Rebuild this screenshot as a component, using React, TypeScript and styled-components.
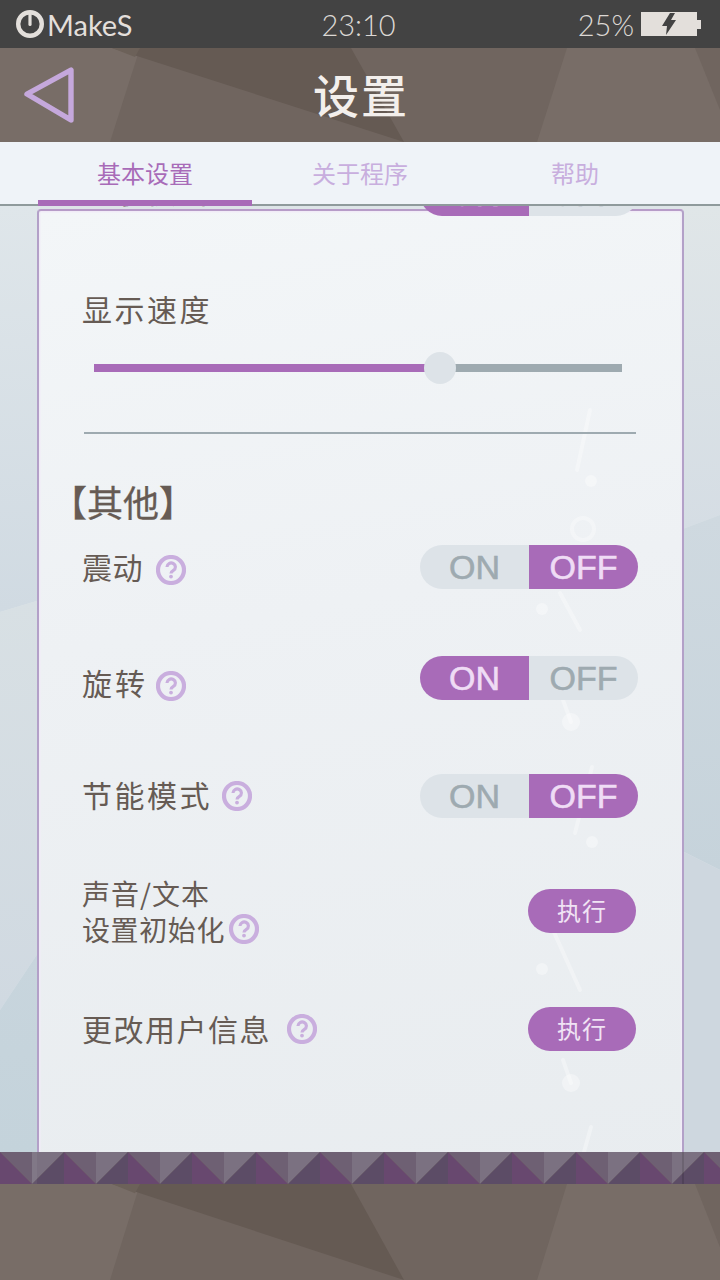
import React from "react";
import styled, { createGlobalStyle } from "styled-components";

const CJK = `"Noto Sans CJK SC", "Noto Sans", sans-serif`;
const PURPLE = "#a86bb8";
const INK = "#665b54";

const Global = createGlobalStyle`
  html, body { margin: 0; padding: 0; background: #736860; }
  * { box-sizing: border-box; }
`;

const Screen = styled.div`
  width: 720px; height: 1280px; overflow: hidden;
  display: flex; flex-direction: column;
  font-family: ${CJK};
`;

const StatusBar = styled.div`
  height: 48px; flex: none; background: #434343; color: #dcd8d4;
  display: grid; grid-template-columns: 1fr auto 1fr; align-items: center;
  padding: 0 19px 0 16px;
  font-family: "Lato", sans-serif; font-size: 29px; font-weight: 300;
`;
const Brand = styled.div`
  display: flex; align-items: center; gap: 3px; font-weight: 400; font-size: 29px; color: #e3dfdb;
`;
const BatteryGroup = styled.div`
  display: flex; align-items: center; justify-content: flex-end; gap: 7px;
`;

const TextureBar = styled.div<{ $h: number }>`
  position: relative; flex: none; height: ${p => p.$h}px; background: #786d67; overflow: hidden;
`;
const TextureSvg = styled.svg`
  position: absolute; inset: 0; width: 100%; height: 100%; display: block;
`;
const HeaderRow = styled.div`
  position: relative; height: 100%; display: flex; align-items: center; justify-content: center;
  padding: 0 0 4px 2px;
`;
const BackButton = styled.svg`
  position: absolute; left: 22px; top: 17px;
`;
const Title = styled.h1`
  margin: 0; font-size: 46px; font-weight: 500; line-height: 1; letter-spacing: 2px; color: #f3efec;
  font-family: ${CJK};
`;

const Tabs = styled.div`
  flex: none; height: 64px; background: #eff3f8; border-bottom: 2px solid #8f9a9c;
  display: grid; grid-template-columns: 214px 216px 214px; padding: 0 38px;
  position: relative; z-index: 2;
`;
const Tab = styled.div<{ $active?: boolean }>`
  height: 64px; padding-top: 14px; text-align: center; font-size: 24px; line-height: 34px;
  color: ${p => (p.$active ? PURPLE : "#c8aede")};
  border-bottom: 6px solid ${p => (p.$active ? PURPLE : "transparent")};
`;

const Main = styled.div`
  position: relative; flex: 1; min-height: 0; overflow: hidden; padding: 3px 36px 0 37px;
  background: #dde4e8;
`;
const MainDeco = styled.svg`
  position: absolute; left: 0; top: 0; display: block;
`;
const Card = styled.div`
  position: relative; height: 1000px; border: 2px solid #b3a0c8; border-top-color: #b79cc8; border-radius: 4px;
  background: linear-gradient(170deg, #f3f6f8 0%, #eef1f4 40%, #e8ecef 100%);
  box-shadow: inset 0 0 0 1.5px #f1ecf7;
`;
const CardDeco = styled.svg`
  position: absolute; left: 0; top: 0; display: block;
`;
const CardBody = styled.div`
  position: relative; display: flex; flex-direction: column; padding: 0 44px 0 43px;
`;

const Row = styled.div<{ $top: number }>`
  height: 44px; margin-top: ${p => p.$top}px; flex: none;
  display: flex; align-items: center; justify-content: space-between;
`;
const LabelGroup = styled.div<{ $gap?: number; $shift?: number }>`
  display: flex; align-items: center; gap: ${p => p.$gap ?? 10}px;
  padding-top: ${p => p.$shift ?? 0}px;
`;
const Label = styled.span<{ $ls?: number; $lift?: number }>`
  font-size: 30px; line-height: 40px; letter-spacing: ${p => p.$ls ?? 2}px; color: ${INK}; white-space: nowrap;
  padding-bottom: ${p => (p.$lift ?? 0) * 2}px;
`;
const SmallLabel = styled.div`
  font-size: 28px; line-height: 36px; letter-spacing: 1px; color: ${INK}; white-space: nowrap;
`;
const SmallLine = styled.div`
  display: flex; align-items: center; gap: 4px; letter-spacing: 0.6px;
`;
const SpeedLabel = styled(Label)`
  display: block; margin-top: 72px;
`;
const Slider = styled.div`
  position: relative; flex: none; height: 8px; width: 528px; margin: 36px 0 12px 12px; background: #9eaab0;
`;
const SliderFill = styled.div`
  height: 100%; background: ${PURPLE};
`;
const SliderThumb = styled.div`
  position: absolute; top: -12px; width: 32px; height: 32px; margin-left: -16px;
  border-radius: 50%; background: #dde3e8;
`;
const Divider = styled.div`
  flex: none; height: 2px; width: 552px; margin: 48px 0 0 2px; background: #9eaab0;
`;
const SectionTitle = styled.h2`
  margin: 45px 0 2px -31px; font-size: 36px; line-height: 44px; font-weight: 400; color: ${INK};
  font-family: ${CJK}; -webkit-text-stroke: 0.3px ${INK};
`;

const ToggleBox = styled.div`
  display: flex; width: 218px; height: 44px; border-radius: 22px; overflow: hidden; flex: none;
`;
const ToggleSeg = styled.div<{ $active: boolean }>`
  width: 109px; height: 100%; display: flex; align-items: center; justify-content: center;
  font-family: "Liberation Sans", Arial, sans-serif; font-size: 34px; line-height: 1;
  -webkit-text-stroke: 0.6px ${p => (p.$active ? "#efdcf5" : "#9eaab0")};
  background: ${p => (p.$active ? PURPLE : "#dde3e8")};
  color: ${p => (p.$active ? "#efdcf5" : "#9eaab0")};
`;
const ActionButton = styled.div`
  width: 108px; height: 44px; margin-right: 2px; padding-bottom: 4px; border-radius: 22px;
  background: ${PURPLE}; color: #f0e3f4;
  display: flex; align-items: center; justify-content: center; font-size: 24px; letter-spacing: 1px;
`;
const Spacer = styled.div`
  height: 60px; flex: none;
`;

const BandSvg = styled.svg`
  display: block; flex: none; position: relative; z-index: 2;
`;

const Toggle = ({ on }: { on: boolean }) => (
  <ToggleBox>
    <ToggleSeg $active={on}>ON</ToggleSeg>
    <ToggleSeg $active={!on}>OFF</ToggleSeg>
  </ToggleBox>
);

const Help = () => (
  <svg width="30" height="30" viewBox="0 0 30 30" fill="none" style={{ flex: "none" }}>
    <circle cx="15" cy="15" r="13" stroke="#c9aede" strokeWidth="4.2" />
    <path d="M11 12a4.2 4 0 1 1 6.4 3.4c-1.5.9-2.4 1.6-2.4 3" stroke="#c9aede" strokeWidth="3.2" />
    <circle cx="15" cy="21.6" r="1.9" fill="#c9aede" />
  </svg>
);

const Texture = () => (
  <TextureSvg viewBox="0 0 720 94" preserveAspectRatio="none">
    <polygon points="140,0 567,0 537,94 110,94" fill="#70655f" />
    <polygon points="112,0 351,0 404,94" fill="#655a53" />
    <polygon points="112,0 140,0 135,9" fill="#6c6159" />
    <polygon points="695,0 720,0 720,62" fill="#70655f" />
  </TextureSvg>
);

const Band = () => {
  const items = Array.from({ length: 13 }, (_, i) => i * 64);
  return (
    <BandSvg width="720" height="32" viewBox="0 0 720 32">
      {items.map(x => (
        <g key={x}>
          <polygon points={`${x},0 ${x + 32},0 ${x + 32},32`} fill="#6e6073" />
          <polygon points={`${x + 32},0 ${x + 64},0 ${x + 32},32`} fill="#7b7181" />
          <polygon points={`${x},0 ${x - 32},32 ${x},32`} fill="#5c4c66" />
          <polygon points={`${x},0 ${x},32 ${x + 32},32`} fill="#68486f" />
        </g>
      ))}
      <rect x="32" y="0" width="5" height="32" fill="#fff" opacity="0.05" />
      <rect x="682" y="0" width="2" height="32" fill="#000" opacity="0.12" />
    </BandSvg>
  );
};

const Backdrop = () => (
  <MainDeco width="720" height="946" viewBox="0 206 720 946">
    <defs>
      <linearGradient id="la" x1="0" y1="0" x2="0" y2="1"><stop offset="0" stopColor="#dfe6ea" /><stop offset="1" stopColor="#d0dae2" /></linearGradient>
      <linearGradient id="lb" x1="0" y1="0" x2="0" y2="1"><stop offset="0" stopColor="#d8e0e4" /><stop offset="1" stopColor="#d0d9e1" /></linearGradient>
      <linearGradient id="lc" x1="0" y1="0" x2="0" y2="1"><stop offset="0" stopColor="#c8d5dd" /><stop offset="1" stopColor="#c4d3db" /></linearGradient>
      <linearGradient id="ra" x1="0" y1="0" x2="0" y2="1"><stop offset="0" stopColor="#e0e6e8" /><stop offset="1" stopColor="#d5dde4" /></linearGradient>
      <linearGradient id="rb" x1="0" y1="0" x2="0" y2="1"><stop offset="0" stopColor="#cfd9e0" /><stop offset="1" stopColor="#c6d3db" /></linearGradient>
    </defs>
    <polygon points="0,206 40,206 40,600 0,612" fill="url(#la)" />
    <polygon points="0,612 40,600 40,950 0,1010" fill="url(#lb)" />
    <polygon points="0,1010 40,950 40,1152 0,1152" fill="url(#lc)" />
    <polygon points="680,206 720,206 720,515 680,530" fill="url(#ra)" />
    <polygon points="680,530 720,515 720,870 680,850" fill="url(#rb)" />
    <polygon points="680,850 720,870 720,1152 680,1152" fill="#ced7df" />
  </MainDeco>
);

const Deco = () => (
  <CardDeco width="643" height="943" viewBox="39 211 643 943" fill="none">
    <g stroke="#fff" strokeOpacity="0.32" strokeWidth="4" strokeLinecap="round">
      <line x1="590" y1="410" x2="577" y2="470" />
      <circle cx="583" cy="529" r="11" />
      <line x1="560" y1="593" x2="580" y2="630" />
      <line x1="563" y1="700" x2="571" y2="722" />
      <line x1="592" y1="767" x2="575" y2="833" />
      <line x1="553" y1="930" x2="580" y2="990" />
      <line x1="563" y1="1060" x2="571" y2="1083" />
      <line x1="591" y1="1127" x2="584" y2="1152" />
    </g>
    <g fill="#fff" fillOpacity="0.36">
      <circle cx="591" cy="481" r="6" />
      <circle cx="542" cy="609" r="6" />
      <circle cx="571" cy="722" r="9" />
      <circle cx="592" cy="842" r="6" />
      <circle cx="542" cy="969" r="6" />
      <circle cx="571" cy="1083" r="9" />
    </g>
  </CardDeco>
);

export default function App() {
  const speed = ((440 - 94) / 528) * 100;
  return (
    <Screen>
      <Global />
      <StatusBar>
        <Brand>
          <svg width="28" height="28" viewBox="0 0 28 28" fill="none">
            <circle cx="14" cy="14" r="11.8" stroke="#e3dfdb" strokeWidth="4.4" />
            <line x1="14" y1="4" x2="14" y2="14.5" stroke="#e3dfdb" strokeWidth="3.2" strokeLinecap="round" />
          </svg>
          MakeS
        </Brand>
        <span>23:10</span>
        <BatteryGroup>
          <span>25%</span>
          <svg width="60" height="24" viewBox="0 0 60 24">
            <rect x="0" y="0" width="56" height="24" fill="#e3dfdb" />
            <rect x="56" y="8" width="4" height="9" fill="#e3dfdb" />
            <polygon points="29,1 21,14 26,14 25,23 35,8 30,8 34,1" fill="#434343" />
          </svg>
        </BatteryGroup>
      </StatusBar>

      <TextureBar $h={94}>
        <Texture />
        <HeaderRow>
          <BackButton width="56" height="60" viewBox="22 65 56 60" fill="none">
            <path d="M27 94 L71 70 L71 120 Z" stroke="#c5a8dc" strokeWidth="5.4" strokeLinejoin="round" />
          </BackButton>
          <Title>设置</Title>
        </HeaderRow>
      </TextureBar>

      <Tabs>
        <Tab $active>基本设置</Tab>
        <Tab>关于程序</Tab>
        <Tab>帮助</Tab>
      </Tabs>

      <Main>
        <Backdrop />
        <Card>
          <Deco />
          <CardBody>
            <Row $top={-39}>
              <Label $lift={4}>显示模式</Label>
              <Toggle on />
            </Row>
            <SpeedLabel $ls={2.5}>显示速度</SpeedLabel>
            <Slider>
              <SliderFill style={{ width: `${speed}%` }} />
              <SliderThumb style={{ left: `${speed}%` }} />
            </Slider>
            <Divider />
            <SectionTitle>【其他】</SectionTitle>
            <Row $top={20}>
              <LabelGroup $shift={6} $gap={13}>
                <Label $ls={0.5} $lift={4}>震动</Label>
                <Help />
              </LabelGroup>
              <Toggle on={false} />
            </Row>
            <Row $top={67}>
              <LabelGroup $shift={16} $gap={8}>
                <Label $ls={3} $lift={4}>旋转</Label>
                <Help />
              </LabelGroup>
              <Toggle on />
            </Row>
            <Row $top={74}>
              <LabelGroup $gap={10}>
                <Label $ls={2.5} $lift={2}>节能模式</Label>
                <Help />
              </LabelGroup>
              <Toggle on={false} />
            </Row>
            <Row $top={71}>
              <SmallLabel>
                <div>声音/文本</div>
                <SmallLine>
                  设置初始化
                  <Help />
                </SmallLine>
              </SmallLabel>
              <ActionButton>执行</ActionButton>
            </Row>
            <Row $top={74}>
              <LabelGroup $gap={16}>
                <Label $ls={1.5} $lift={1}>更改用户信息</Label>
                <Help />
              </LabelGroup>
              <ActionButton>执行</ActionButton>
            </Row>
            <Spacer />
          </CardBody>
        </Card>
      </Main>

      <Band />
      <TextureBar $h={96}>
        <Texture />
      </TextureBar>
    </Screen>
  );
}
